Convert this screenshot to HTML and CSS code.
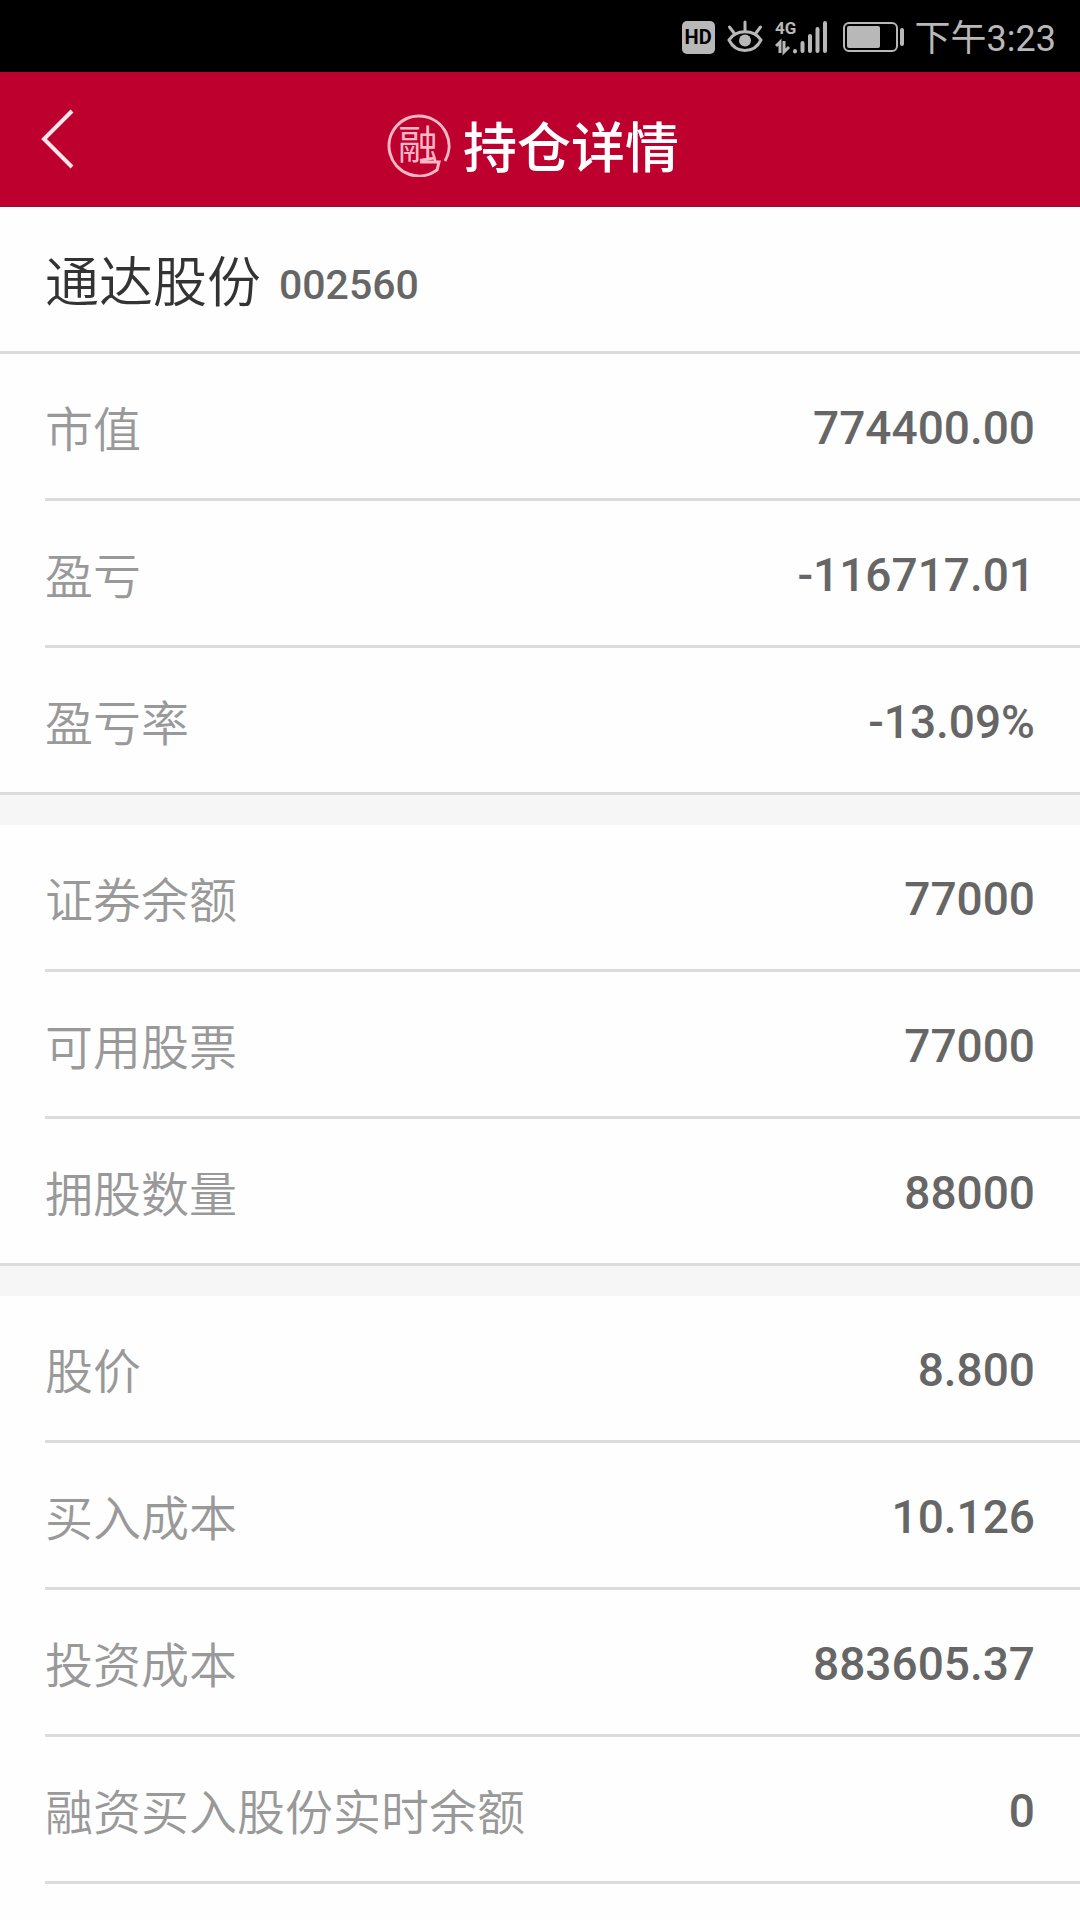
FILE: index.html
```html
<!DOCTYPE html>
<html lang="zh-CN">
<head>
    <meta charset="UTF-8">
    <meta name="viewport" content="width=device-width, initial-scale=1.0">
    <title>持仓详情</title>
    <link rel="stylesheet" href="styles.css">
</head>
<body>
    <div class="status-bar">
        <span class="hd">HD</span>
        <svg class="eye" width="36" height="34" viewBox="0 0 36 34" fill="none" stroke="currentColor" stroke-width="3" stroke-linecap="round">
            <path d="M2 20C9 9 27 9 34 20C27 34 9 34 2 20Z" />
            <path d="M18 2V11M2.500 7L7 13M33.500 7L29 13" />
            <circle cx="18" cy="20.500" r="6" fill="currentColor" stroke="none" />
        </svg>
        <svg class="signal" width="53" height="44" viewBox="0 -4 53 44" fill="none" stroke="currentColor" stroke-width="4" stroke-linecap="round">
            <text class="network" x="0" y="15">4G</text>
            <path d="M20 32V32.500M27.500 24V32M35 17V32M42.500 10V32M50 4V32" />
            <path d="M1 27L5 23V34M9 22V33L14 28" stroke-width="3" stroke-linecap="butt" />
        </svg>
        <svg class="battery" width="62" height="30" viewBox="0 0 62 30">
            <rect x="1" y="1" width="53" height="28" rx="5" fill="none" stroke="currentColor" stroke-width="2" />
            <rect x="4" y="4" width="33" height="22" rx="2" fill="currentColor" />
            <rect x="57" y="6" width="4" height="18" rx="2" fill="currentColor" />
        </svg>
        <span class="time">下午3:23</span>
    </div>

    <header class="header">
        <button class="back-button" type="button" aria-label="返回">
            <svg width="34" height="60" viewBox="0 0 34 60" fill="none" stroke="currentColor" stroke-width="4">
                <path d="M31 2L3 30L31 58" />
            </svg>
        </button>
        <div class="header-title">
            <svg class="seal" width="64" height="64" viewBox="0 0 64 64" fill="none" stroke="currentColor" stroke-width="3">
                <path d="M58 48A30 30 0 1 0 50 57L52 49H33" />
                <text class="seal-text" x="31" y="46" text-anchor="middle">融</text>
            </svg>
            <h1>持仓详情</h1>
        </div>
    </header>

    <main>
        <div class="stock">
            <h2>通达股份</h2>
            <span class="stock-code">002560</span>
        </div>

        <dl class="group closed">
            <div class="row"><dt>市值</dt><dd>774400.00</dd></div>
            <div class="row"><dt>盈亏</dt><dd>-116717.01</dd></div>
            <div class="row"><dt>盈亏率</dt><dd>-13.09%</dd></div>
        </dl>

        <dl class="group closed">
            <div class="row"><dt>证券余额</dt><dd>77000</dd></div>
            <div class="row"><dt>可用股票</dt><dd>77000</dd></div>
            <div class="row"><dt>拥股数量</dt><dd>88000</dd></div>
        </dl>

        <dl class="group">
            <div class="row"><dt>股价</dt><dd>8.800</dd></div>
            <div class="row"><dt>买入成本</dt><dd>10.126</dd></div>
            <div class="row"><dt>投资成本</dt><dd>883605.37</dd></div>
            <div class="row"><dt>融资买入股份实时余额</dt><dd>0</dd></div>
        </dl>
    </main>
</body>
</html>
```

FILE: styles.css
```css
* {
    box-sizing: border-box;
}

body {
    margin: 0;
    background-color: #fefefe;
    font-family: Roboto, "Noto Sans CJK SC", sans-serif;
}

h1,
h2,
dl,
dd {
    margin: 0;
}

h1,
h2,
dt {
    font-family: "Noto Sans CJK SC", sans-serif;
}

/* Status bar */
.status-bar {
    display: flex;
    justify-content: flex-end;
    align-items: center;
    height: 72px;
    padding: 2px 24px 0 0;
    background-color: #000;
    color: #b8b8b8;
}

.hd {
    width: 33px;
    margin-right: 12px;
    border-radius: 5px;
    background-color: #b8b8b8;
    color: #000;
    font-size: 20px;
    font-weight: 700;
    line-height: 33px;
    text-align: center;
}

.eye {
    margin-right: 12px;
}

.signal {
    margin-right: 15px;
}

.network {
    fill: currentColor;
    stroke: none;
    font-size: 17px;
    font-weight: 700;
}

.battery {
    margin-right: 10px;
}

.time {
    padding-top: 3px;
    font-size: 36px;
    font-weight: 400;
    line-height: 40px;
}

/* Header */
.header {
    display: grid;
    grid-template-columns: 120px 1fr 120px;
    height: 135px;
    border-bottom: 1px solid #8c1233;
    background-color: #be002f;
    color: #fff;
}

.back-button {
    display: flex;
    align-items: center;
    padding: 0 0 0 41px;
    border: none;
    background: none;
    color: #ffe6ea;
    cursor: pointer;
}

.header-title {
    display: flex;
    justify-content: center;
    align-items: center;
    gap: 12px;
    padding: 12px 14px 0 0;
}

.header-title h1 {
    font-size: 54px;
    font-weight: 500;
    line-height: 60px;
}

.seal {
    color: #ffb8c6;
}

.seal-text {
    fill: currentColor;
    stroke: none;
    font-size: 40px;
    font-weight: 400;
}

/* Stock name */
.stock {
    display: flex;
    align-items: center;
    gap: 18px;
    height: 147px;
    padding: 0 45px;
    border-bottom: 3px solid #dcdcdc;
}

.stock h2 {
    color: #333;
    font-size: 54px;
    font-weight: 350;
    line-height: 60px;
}

.stock-code {
    padding-top: 12px;
    color: #666;
    font-size: 41px;
    font-weight: 500;
    line-height: 60px;
}

/* Detail rows */
.row {
    display: flex;
    justify-content: space-between;
    align-items: center;
    height: 147px;
    margin-left: 45px;
    padding-right: 45px;
    border-bottom: 3px solid #dcdcdc;
}

.row dt {
    color: #999;
    font-size: 48px;
    font-weight: 350;
    line-height: 60px;
}

.row dd {
    padding-top: 4px;
    color: #666;
    font-size: 46px;
    font-weight: 500;
    line-height: 60px;
}

.closed {
    border-bottom: 30px solid #f6f6f6;
}

.closed .row:last-child {
    margin-left: 0;
    padding-left: 45px;
}
```
